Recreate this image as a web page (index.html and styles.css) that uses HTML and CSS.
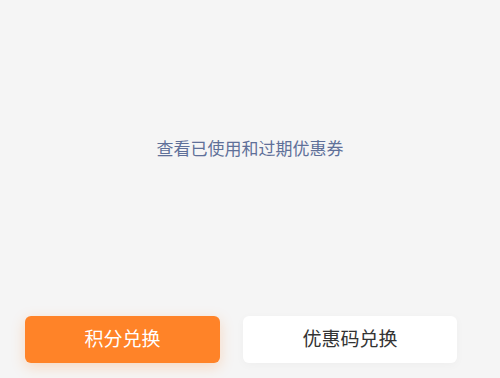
FILE: index.html
```html
<!DOCTYPE html>
<html lang="zh">
<head>
<meta charset="utf-8">
<link rel="stylesheet" href="styles.css">
</head>
<body>
<div class="page">
  <div class="content">
    <a class="history">查看已使用和过期优惠券</a>
  </div>
  <div class="actions">
    <button class="btn btn-primary">积分兑换</button>
    <button class="btn btn-secondary">优惠码兑换</button>
  </div>
</div>
</body>
</html>
```

FILE: styles.css
```css
html, body {
  margin: 0;
  padding: 0;
  background: #f5f5f5;
  font-family: "Noto Sans CJK SC", "Noto Sans", sans-serif;
}
.page {
  width: 500px;
  height: 378px;
  display: flex;
  flex-direction: column;
  box-sizing: border-box;
}
.content {
  flex: 1;
  display: flex;
  justify-content: center;
  padding-top: 135px;
}
.history {
  font-size: 17px;
  line-height: 26px;
  height: 26px;
  color: #5f7099;
}
.actions {
  display: flex;
  padding: 0 43px 15px 25px;
  gap: 23px;
}
.btn {
  height: 47px;
  border: none;
  border-radius: 6px;
  font-family: "Noto Sans CJK SC", "Noto Sans", sans-serif;
  font-size: 19px;
  padding: 0 0 4px 0;
}
.btn-primary {
  width: 195px;
  background: #ff8328;
  color: #fff;
  box-shadow: 0 4px 14px rgba(255, 131, 40, 0.25);
}
.btn-secondary {
  width: 214px;
  background: #fff;
  color: #333;
  box-shadow: 0 2px 10px rgba(0, 0, 0, 0.03);
}
```
